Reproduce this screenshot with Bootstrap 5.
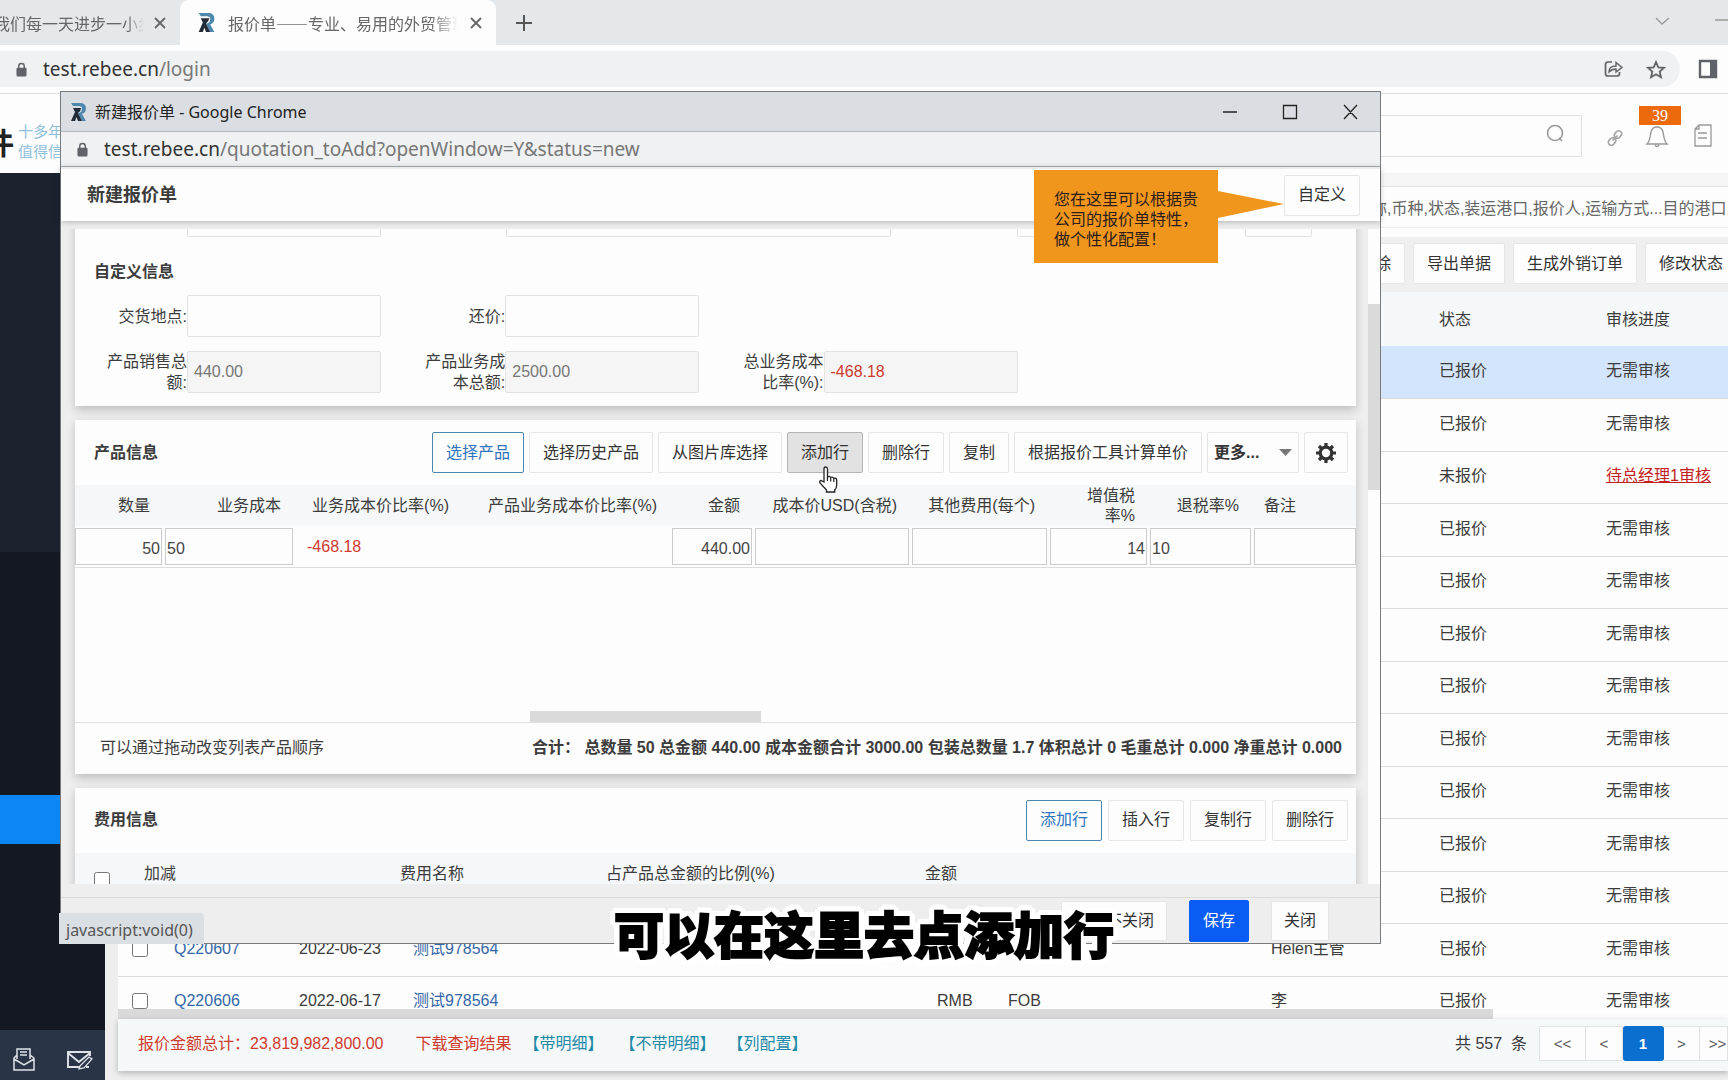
<!DOCTYPE html>
<html lang="zh-CN">
<head>
<meta charset="utf-8">
<meta name="viewport" content="width=device-width, initial-scale=1">
<title>报价单——专业、易用的外贸管理软件</title>
<link href="https://cdn.jsdelivr.net/npm/bootstrap@5.3.0/dist/css/bootstrap.min.css" rel="stylesheet">
<style>
:root{--ui:"Liberation Sans","Noto Sans CJK SC",sans-serif;--chrome:"Noto Sans","Noto Sans CJK SC",sans-serif}
body{font-family:var(--ui);font-size:16px;line-height:20px;color:#3c3c3c;background:#eee}
.screen{height:100vh;overflow:hidden}
svg{display:block;flex:none}
/* browser */
.tabstrip{height:45px;background:#e4e8ea;font-family:"Noto Sans CJK SC",sans-serif;color:#666}
.tab-old{width:180px;height:45px;gap:10px}
.tab-now{width:316px;height:45px;background:#fdfdfd;border-radius:9px 9px 0 0}
.tab-title{white-space:nowrap;overflow:hidden;-webkit-mask-image:linear-gradient(90deg,#000 88%,transparent);mask-image:linear-gradient(90deg,#000 88%,transparent)}
.tab-old .tab-title{width:144px;text-indent:-6px}
.tab-now .tab-title{width:230px}
.toolbar{height:49px;background:#fdfdfd;border-bottom:1px solid #ddd;padding-right:8px}
.omnibox{height:36px;background:#eff1f2;border-radius:0 18px 18px 0;font:19px/24px var(--chrome);color:#777;padding-right:14px;gap:22px}
.omnibox b,.w-addr b{font-weight:400;color:#333}
/* app */
.app-head{height:79px;background:#fdfdfd}
.logo-zone{width:118px;overflow:hidden;white-space:nowrap;padding-top:14px}
.logo-big{font:700 30px/32px "Noto Sans CJK SC",sans-serif;color:#222;width:14px;direction:rtl}
.logo-sub{font:15px/20px "Noto Sans CJK SC",sans-serif;color:#8fc0dc}
.search-box{width:720px;height:42px;border:1px solid #e2e2e2;background:#fdfdfd}
.search-box input{border:0;background:none;outline:0}
.notice{width:42px;height:19px;background:#ec6a0c;color:#fff;font:16px/19px "Liberation Serif",serif;top:-18px;left:-5px}
.side{width:105px;background:#141820}
.side-top{height:379px;background:#1c222e}
.side-on{height:49px;background:#0c86f5;margin-top:243px}
.side-foot{height:50px;background:#293446}
.crumbs{height:14px;background:#f6f6f6;border-bottom:1px solid #e4e4e4}
.filters{height:50px;background:#fdfdfd;padding-left:1258px;color:#666}
.filters span{height:41px;line-height:44px;border-bottom:1px solid #ececec}
.acts{height:55px;background:#efefef;padding:0 0 2px 1208px}
.plain{height:41px;border:1px solid #e6e6e6;border-radius:2px;background:#fdfdfd;color:#333;font-size:16px;line-height:20px;padding:0 13px;white-space:nowrap;flex:none}
.list-pane{height:717px;overflow:hidden;background:#fdfdfd}
.list-pane table{table-layout:fixed;margin:0;white-space:nowrap}
.list-pane th,.list-pane td{padding:0 0 2px;font-weight:400;text-align:left;vertical-align:middle}
.list-pane th{height:54px;background:#f5f8f9;padding:2px 0 0}
.list-pane td{height:52px;border-bottom:1px solid #dcdcdc}
.list-pane tr:nth-child(even) td{height:53px}
.list-pane .picked td{background:#d3e5fd}
.list-pane a{color:#3567a8;text-decoration:none}
.list-pane a.todo{color:#c32121;text-decoration:underline}
.tick{width:16px;height:16px;margin:0;display:block;flex:none}
.hbar{height:10px;background:#fdfdfd}
.hbar div{width:1375px;height:10px;background:#dadada}
.foot{height:52px;background:#f5f8f9;box-shadow:0 2px 6px rgba(0,0,0,.25);white-space:nowrap;padding-bottom:3px}
.red-t,.box.red-t{color:#cf3a2e}
.foot a{text-decoration:none}
.teal-t{color:#1f8aa8}
.pager button{height:35px;border:1px solid #e2e2e2;border-left-width:0;background:#fdfdfd;color:#555;padding:0;font-size:15px}
.pager .cur{background:#0b6fd0;border-color:#0b6fd0;color:#fff;font-weight:700;border-radius:3px;width:41px}
/* popup window */
.win{position:absolute;left:60px;top:91px;width:1321px;height:853px;border:1px solid #777b7e;background:#eee}
.w-title{height:40px;background:#dadee3;border-bottom:1px solid #b5b9bc;font:16px/20px var(--chrome);color:#222;padding-right:22px}
.w-addr{height:35px;background:#eff1f2;border-bottom:1px solid #a9b1b1;font:19px/24px var(--chrome);color:#777}
.w-head{height:54px;background:#fdfdfd;border-top:2px solid #ececec;box-shadow:0 1px 6px rgba(0,0,0,.25);z-index:1;padding:0 20px 0 26px}
.w-head h1{font-size:18px;line-height:24px;font-weight:700;margin:0}
.w-body{height:655px;margin-top:8px;overflow:hidden;padding-left:14px;gap:12px}
.panel{background:#fdfdfd;box-shadow:0 4px 9px rgba(0,0,0,.2);margin-bottom:14px}
.panel h2{font-size:16px;line-height:20px;font-weight:700;margin:0}
.panel .sec-title{padding:25px 19px 13px}
.bar-row{height:65px;gap:5px;padding:0 8px 0 19px}
.scrolled{margin-top:-34px}
.box{height:42px;border:1px solid #e2e2e2;border-radius:2px;background:#fdfdfd;width:194px;padding:0 6px;color:#777}
.box.off{background:#f5f5f5}
.lab{width:112px;padding-left:28px;text-align:right;line-height:21px;flex:none}
.f-row{height:42px;margin-bottom:14px}
.top-fields{padding-left:112px}
.main-b{border-color:#4a86b0;color:#2f74bd}
.hover-b{background:#e2e2e2;border-color:#b4b4b4}
.more-s{width:92px;font-weight:700;padding:0 6px;appearance:none}
.p-table{table-layout:fixed;width:100%}
.p-table th{height:40px;background:#f5f7f9;font-weight:400;text-align:right;padding:1px 14px 0 0;line-height:20px}
.p-table th:last-child{text-align:left;padding-left:11px}
.p-table td{height:41px;padding:2px 2px 1px 1px;border-bottom:1px solid #dcdcdc}
.p-table td:first-child{padding-left:0}
.p-table td:last-child{padding-right:0}
.p-table .num-cell{padding-left:12px}
.p-table input{width:100%;height:37px;border:1px solid #ccc;background:#fdfdfd;padding:5px 1px 0;color:#444;display:block}
.p-void{height:143px}
.p-scroll{height:12px;border-bottom:1px solid #e2e2e2;padding-left:455px}
.p-scroll div{width:231px;height:11px;background:#dadada}
.p-foot{height:51px;padding:0 14px 0 25px}
.c-table{table-layout:fixed;width:100%}
.c-table th{height:42px;background:#f5f7f9;font-weight:400;padding:0;vertical-align:middle}
.c-table .pick-cell{vertical-align:top;padding:19px 0 0 19px}
.v-track{width:12px;background:#fdfdfd;flex:none}
.v-track div{height:186px;margin-top:75px;background:#dadada}
.w-foot{height:47px;border-top:1px solid #dcdcdc;margin-top:13px;padding-right:51px;gap:22px}
.w-foot .plain{padding:0 12px;height:40px}
.w-foot .save{background:#0a5cf5;border-color:#0a5cf5;color:#fff;height:42px;padding:0 13px}
.tip{position:absolute;z-index:3;left:973px;top:78px;width:184px;height:93px;background:#f0961c;color:#2d1c1c;padding:20px 18px 0 20px;line-height:20px}
.tip svg{position:absolute;left:184px;top:21px}
.hand{position:absolute;z-index:4;left:757px;top:374px}
.status{position:absolute;left:-2px;bottom:-1px;width:145px;height:31px;background:#dadfe3;border-radius:0 4px 0 0;font:16px/34px var(--chrome);color:#555;padding-left:7px}
.subtitle{position:absolute;left:0;right:0;top:894px;text-align:center;margin:0;font:900 50px/76px "Noto Sans CJK SC",sans-serif;color:#000;-webkit-text-stroke:2px #000;
text-shadow:6px 0 #fff,-6px 0 #fff,0 6px #fff,0 -6px #fff,4px 4px #fff,-4px 4px #fff,4px -4px #fff,-4px -4px #fff,6px 3px #fff,-6px 3px #fff,6px -3px #fff,-6px -3px #fff,3px 6px #fff,-3px 6px #fff,3px -6px #fff,-3px -6px #fff}
</style>
<script src="https://cdn.jsdelivr.net/npm/bootstrap@5.3.0/dist/js/bootstrap.bundle.min.js"></script>
</head>
<body>
<svg width="0" height="0" class="position-absolute" aria-hidden="true">
  <symbol id="r" viewBox="0 0 18 20"><path d="M2 1h9q6 0 6 5.500 0 4-4 5.500l4 7h-4l-4-8q4 0 4-4.500Q13 4 10 4H4z" fill="#4d87ad"/><path d="M4 6h8q0 3-3 5l4 8H9l-1.500-4L6 19H2l4-9z" fill="#222b38"/></symbol>
  <symbol id="lock" viewBox="0 0 12 16"><path d="M3 7V4.500a3 3 0 0 1 6 0V7" fill="none" stroke="#5f6368" stroke-width="1.600"/><rect x="0.500" y="6" width="11" height="9.500" rx="1.200" fill="#5f6368"/></symbol>
  <symbol id="x" viewBox="0 0 12 12"><path d="M1 1l10 10M11 1L1 11" stroke="currentColor" stroke-width="1.800"/></symbol>
</svg>
<div class="screen d-flex flex-column">
  <header class="tabstrip d-flex align-items-center">
    <div class="tab-old d-flex align-items-center">
      <div class="tab-title">我们每一天进步一小步</div>
      <svg width="12" height="12"><use href="#x"/></svg>
    </div>
    <div class="tab-now d-flex align-items-center ps-3">
      <svg class="me-2" width="20" height="21"><use href="#r"/></svg>
      <div class="tab-title ms-1 me-2 pe-1">报价单——专业、易用的外贸管理</div>
      <svg width="12" height="12" class="ms-1"><use href="#x"/></svg>
    </div>
    <svg class="ms-3" width="26" height="16" viewBox="0 0 26 16"><path d="M12 0v16M4 8h16" stroke="#555" stroke-width="2"/></svg>
    <svg class="ms-auto" width="73" height="16" viewBox="0 0 73 16"><path d="M1 3l6 6 7-6M60 5h13" fill="none" stroke="#999" stroke-width="1.300"/></svg>
  </header>
  <div class="toolbar d-flex align-items-center flex-shrink-0">
    <div class="omnibox d-flex align-items-center flex-grow-1">
      <div class="d-flex align-items-center flex-grow-1 ps-3"><svg class="me-3" width="11" height="15"><use href="#lock"/></svg><div><b>test.rebee.cn</b>/login</div></div>
      <svg width="20" height="18" viewBox="0 0 20 18" fill="none" stroke="#5f6368" stroke-width="1.700"><path d="M8 2H4Q1.500 2 1.500 4.500v9Q1.500 16 4 16h9q2.500 0 2.500-2.500V12"/><path d="M5 12c0-4 3-6 7-6V2.500L18 7.500 12 12V9c-3 0-5 1-7 3z" stroke-width="1.400"/></svg>
      <svg width="20" height="19" viewBox="0 0 20 19"><path d="M10 2l2.300 5.300 5.700.500-4.300 3.800 1.300 5.600-5-3-5 3 1.300-5.600L2 7.800l5.700-.500z" fill="none" stroke="#5f6368" stroke-width="1.800"/></svg>
    </div>
    <svg class="ms-3" width="24" height="20" viewBox="0 0 24 20"><path d="M4 2h16v16H4z" fill="none" stroke="#5f6368" stroke-width="2.400"/><path d="M14 2h6v16h-6z" fill="#5f6368"/></svg>
  </div>
  <div class="app-head d-flex align-items-center flex-shrink-0">
    <div class="logo-zone d-flex align-items-center gap-1">
      <div class="logo-big">件</div>
      <div class="logo-sub">十多年<br>值得信赖</div>
    </div>
    <div class="search-box d-flex align-items-center ms-auto mt-2 mb-1">
      <input class="flex-grow-1" type="search" aria-label="搜索">
      <svg class="me-3 mb-1" width="20" height="20" viewBox="0 0 20 20" fill="none" stroke="#999" stroke-width="1.600"><circle cx="10" cy="9" r="7.500"/><path d="M14 14l3 3"/></svg>
    </div>
    <svg class="mt-2 ms-4" width="18" height="18" viewBox="0 0 18 18" fill="none" stroke="#a5a5a5" stroke-width="1.700"><rect x="9" y="1.500" width="6" height="8" rx="3" transform="rotate(40 12 5.500)"/><rect x="3" y="8.500" width="6" height="8" rx="3" transform="rotate(40 6 12.500)"/><path d="M6.500 11.500l5-5"/></svg>
    <div class="position-relative ms-3 ps-1 pt-1">
      <svg width="26" height="24" viewBox="0 0 26 24" fill="none" stroke="#999" stroke-width="1.400"><path d="M3 20c3-3 3-7 4-12 1-4 3-5 6-5s5 1 6 5c1 5 1 9 4 12zM11 21q2 3 4 0"/></svg>
      <span class="notice position-absolute text-center ms-1 mt-1">39</span>
    </div>
    <svg class="mt-1 ms-4 me-3" width="18" height="23" viewBox="0 0 18 23" fill="none" stroke="#999" stroke-width="1.300"><path d="M1 5l4-4h12v21H1zM4 9h9M4 14h9M1 5h4V1"/></svg>
  </div>
  <div class="d-flex flex-grow-1">
    <nav class="side d-flex flex-column flex-shrink-0">
      <div class="side-top"></div>
      <div class="side-on"></div>
      <div class="side-foot mt-auto d-flex align-items-center ps-2 pt-2">
        <svg class="ms-1" width="24" height="24" viewBox="0 0 24 24" fill="none" stroke="#dfe3e8" stroke-width="1.500"><path d="M5 12V2h13v10M8 5h7M8 8h7M5 8l-3 3v12h20V11l-4-3M2 12l10 6 10-6"/></svg>
        <svg class="ms-4 flex-shrink-0" width="36" height="24" viewBox="0 0 36 24" fill="none" stroke="#dfe3e8" stroke-width="1.900"><path d="M20 20H8V5h22v4M8 6l11 9L30 6M29 20h-3"/><path d="M20 19l9-9 3 2-8 9-5 1z" stroke-width="1.300"/></svg>
      </div>
    </nav>
    <main class="flex-grow-1 overflow-hidden d-flex flex-column">
      <div class="crumbs"></div>
      <div class="filters d-flex"><span class="flex-grow-1 text-nowrap ps-2 overflow-hidden">称,币种,状态,装运港口,报价人,运输方式...目的港口,报价</span></div>
      <div class="acts d-flex align-items-center gap-2">
        <button type="button" class="plain">批量删除</button>
        <button type="button" class="plain">导出单据</button>
        <button type="button" class="plain">生成外销订单</button>
        <button type="button" class="plain">修改状态</button>
      </div>
      <div class="flex-grow-1" style="padding-left:13px">
        <div class="list-pane">
          <table class="w-100">
            <colgroup><col style="width:14px"><col style="width:42px"><col style="width:125px"><col style="width:114px"><col style="width:524px"><col style="width:71px"><col style="width:263px"><col style="width:168px"><col style="width:167px"><col></colgroup>
            <thead><tr><th colspan="8"></th><th>状态</th><th>审核进度</th></tr></thead>
            <tbody>
              <tr class="picked"><td colspan="8"></td><td>已报价</td><td>无需审核</td></tr>
              <tr><td colspan="8"></td><td>已报价</td><td>无需审核</td></tr>
              <tr><td colspan="8"></td><td>未报价</td><td><a class="todo" href="#">待总经理1审核</a></td></tr>
              <tr><td colspan="8"></td><td>已报价</td><td>无需审核</td></tr>
              <tr><td colspan="8"></td><td>已报价</td><td>无需审核</td></tr>
              <tr><td colspan="8"></td><td>已报价</td><td>无需审核</td></tr>
              <tr><td colspan="8"></td><td>已报价</td><td>无需审核</td></tr>
              <tr><td colspan="8"></td><td>已报价</td><td>无需审核</td></tr>
              <tr><td colspan="8"></td><td>已报价</td><td>无需审核</td></tr>
              <tr><td colspan="8"></td><td>已报价</td><td>无需审核</td></tr>
              <tr><td colspan="8"></td><td>已报价</td><td>无需审核</td></tr>
              <tr><td></td><td><input class="tick" type="checkbox" aria-label="Q220607"></td><td><a href="#">Q220607</a></td><td>2022-06-23</td><td><a href="#">测试978564</a></td><td></td><td></td><td>Helen主管</td><td>已报价</td><td>无需审核</td></tr>
              <tr><td></td><td><input class="tick" type="checkbox" aria-label="Q220606"></td><td><a href="#">Q220606</a></td><td>2022-06-17</td><td><a href="#">测试978564</a></td><td>RMB</td><td>FOB</td><td>李</td><td>已报价</td><td>无需审核</td></tr>
            </tbody>
          </table>
        </div>
        <div class="hbar"><div></div></div>
        <div class="foot d-flex align-items-center">
          <span class="red-t ms-3 ps-1 me-4 pe-1">报价金额总计：23,819,982,800.00</span>
          <a class="red-t ms-1 me-2 pe-1" href="#">下载查询结果</a>
          <a class="teal-t me-3" href="#">【带明细】</a>
          <a class="teal-t me-2 pe-1" href="#">【不带明细】</a>
          <a class="teal-t" href="#">【列配置】</a>
          <span class="ms-auto me-2 pe-1">共 557 &nbsp;条</span>
          <div class="pager d-flex">
            <button type="button" style="width:47px;border-left-width:1px">&lt;&lt;</button><button type="button" style="width:37px">&lt;</button><button type="button" class="cur">1</button><button type="button" style="width:36px">&gt;</button><button type="button" style="width:28px" class="ps-2 overflow-hidden">&gt;&gt;</button>
          </div>
        </div>
      </div>
    </main>
  </div>
</div>

<section class="win">
  <div class="w-title d-flex align-items-center">
    <svg class="ms-2" width="18" height="20"><use href="#r"/></svg>
    <span class="ms-2 flex-grow-1">新建报价单 - Google Chrome</span>
    <svg width="136" height="16" viewBox="0 0 136 16" fill="none" stroke="#222" stroke-width="1.300"><path d="M1 8h14M61.500 1.500h13v13h-13zM122 1l13 14M135 1l-13 14"/></svg>
  </div>
  <div class="w-addr d-flex align-items-center ps-3">
    <svg width="11" height="15"><use href="#lock"/></svg>
    <span class="ms-3"><b>test.rebee.cn</b>/quotation_toAdd?openWindow=Y&amp;status=new</span>
  </div>
  <div class="w-head position-relative d-flex align-items-center justify-content-between">
    <h1>新建报价单</h1>
    <button type="button" class="plain">自定义</button>
  </div>
  <div class="w-body d-flex">
    <div class="flex-grow-1 scrolled">
      <div class="panel" style="height:211px">
        <div class="top-fields d-flex">
          <input class="box" aria-label="字段一"><input class="box" aria-label="字段二" style="width:385px;margin-left:125px"><input class="box" aria-label="字段三" style="margin-left:126px"><input class="box" aria-label="字段四" style="width:67px;margin-left:34px">
        </div>
        <h2 class="sec-title">自定义信息</h2>
        <div class="row g-0 pe-2 f-row">
          <div class="col-3 d-flex align-items-center"><label class="lab" for="f1">交货地点:</label><input id="f1" class="box"></div>
          <div class="col-3 d-flex align-items-center"><label class="lab" for="f2">还价:</label><input id="f2" class="box"></div>
        </div>
        <div class="row g-0 pe-2 f-row">
          <div class="col-3 d-flex align-items-center"><label class="lab" for="f3">产品销售总额:</label><input id="f3" class="box off" value="440.00" readonly></div>
          <div class="col-3 d-flex align-items-center"><label class="lab" for="f4">产品业务成本总额:</label><input id="f4" class="box off" value="2500.00" readonly></div>
          <div class="col-3 d-flex align-items-center"><label class="lab" for="f5">总业务成本比率(%):</label><input id="f5" class="box off red-t" value="-468.18" readonly></div>
        </div>
      </div>
      <div class="panel">
        <div class="bar-row d-flex align-items-center">
          <h2 class="me-auto">产品信息</h2>
          <button type="button" class="plain main-b">选择产品</button>
          <button type="button" class="plain">选择历史产品</button>
          <button type="button" class="plain">从图片库选择</button>
          <button type="button" class="plain hover-b">添加行</button>
          <button type="button" class="plain">删除行</button>
          <button type="button" class="plain">复制</button>
          <button type="button" class="plain">根据报价工具计算单价</button>
          <div class="position-relative">
            <select class="plain more-s" aria-label="更多"><option>更多...</option></select>
            <svg class="position-absolute top-50 end-0 translate-middle-y me-1" width="16" height="8" viewBox="0 0 16 8"><path d="M0 0h13L6.500 7z" fill="#777"/></svg>
          </div>
          <button type="button" class="plain" style="padding:0 10px" aria-label="设置"><svg width="22" height="22" viewBox="0 0 22 22"><circle cx="11" cy="11" r="5.800" fill="none" stroke="#333" stroke-width="3.200"/><path d="M11 1v4M11 17v4M1 11h4M17 11h4M4 4l3 3M15 15l3 3M18 4l-3 3M7 15l-3 3" stroke="#333" stroke-width="3.200"/></svg></button>
        </div>
        <table class="p-table">
          <colgroup><col style="width:89px"><col style="width:131px"><col style="width:168px"><col style="width:208px"><col style="width:83px"><col style="width:157px"><col style="width:138px"><col style="width:100px"><col style="width:104px"><col></colgroup>
          <thead><tr><th>数量</th><th>业务成本</th><th>业务成本价比率(%)</th><th>产品业务成本价比率(%)</th><th>金额</th><th>成本价USD(含税)</th><th>其他费用(每个)</th><th>增值税<br>率%</th><th>退税率%</th><th>备注</th></tr></thead>
          <tbody><tr>
            <td><input class="text-end" value="50" aria-label="数量"></td><td><input value="50" aria-label="业务成本"></td><td class="red-t num-cell">-468.18</td><td></td>
            <td><input class="text-end" value="440.00" aria-label="金额"></td><td><input aria-label="成本价USD"></td><td><input aria-label="其他费用"></td><td><input class="text-end" value="14" aria-label="增值税率"></td><td><input value="10" aria-label="退税率"></td><td><input aria-label="备注"></td>
          </tr></tbody>
        </table>
        <div class="p-void"></div>
        <div class="p-scroll"><div></div></div>
        <div class="p-foot d-flex align-items-center justify-content-between">
          <span>可以通过拖动改变列表产品顺序</span>
          <strong>合计： 总数量 50 总金额 440.00 成本金额合计 3000.00 包装总数量 1.7 体积总计 0 毛重总计 0.000 净重总计 0.000</strong>
        </div>
      </div>
      <div class="panel">
        <div class="bar-row d-flex align-items-center" style="gap:6px">
          <h2 class="me-auto">费用信息</h2>
          <button type="button" class="plain main-b">添加行</button>
          <button type="button" class="plain">插入行</button>
          <button type="button" class="plain">复制行</button>
          <button type="button" class="plain">删除行</button>
        </div>
        <table class="c-table">
          <colgroup><col style="width:69px"><col style="width:256px"><col style="width:206px"><col style="width:319px"><col></colgroup>
          <thead><tr><th class="pick-cell"><input class="tick" type="checkbox" aria-label="全选"></th><th>加减</th><th>费用名称</th><th>占产品总金额的比例(%)</th><th>金额</th></tr></thead>
        </table>
      </div>
    </div>
    <div class="v-track"><div></div></div>
  </div>
  <div class="w-foot d-flex align-items-center justify-content-end">
    <button type="button" class="plain">保存不关闭</button>
    <button type="button" class="plain save">保存</button>
    <button type="button" class="plain">关闭</button>
  </div>
  <div class="tip">您在这里可以根据贵公司的报价单特性，做个性化配置！<svg width="66" height="27" viewBox="0 0 66 27"><path d="M0 0l66 13L0 27z" fill="#f0961c"/></svg></div>
  <svg class="hand" width="22" height="27" viewBox="0 0 22 27"><path d="M6 16V3q0-2 1.700-2T9.500 3v8q2-1.500 3.200.500 2-1 3 .800 3-.800 3 1.700v5q0 3-2 5v2H8.500v-2L2 17q-1-2 1-2.500z" fill="#fff" stroke="#222" stroke-width="1.300"/><path d="M9.500 11v4M12.700 12v3.500M15.800 12.500V16" stroke="#222" stroke-width="1.200"/></svg>
  <div class="status">javascript:void(0)</div>
</section>
<p class="subtitle">可以在这里去点添加行</p>
</body>
</html>
